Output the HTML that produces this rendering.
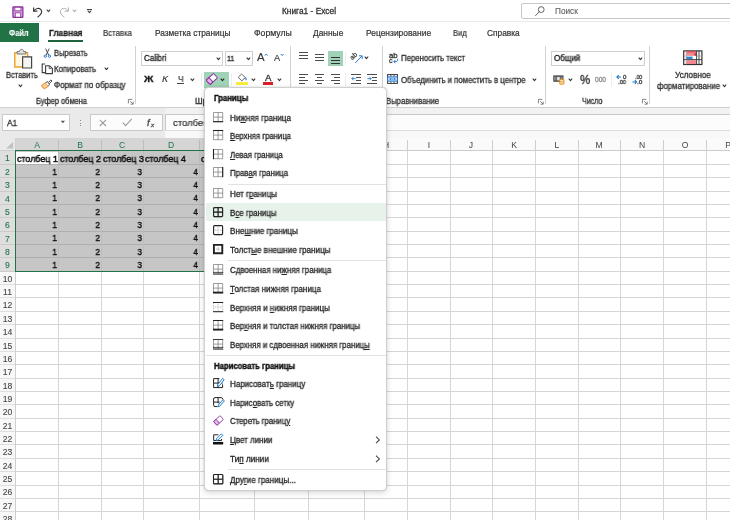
<!DOCTYPE html><html lang="ru"><head><meta charset="utf-8"><title>Книга1 - Excel</title><style>
html,body{margin:0;padding:0;background:#fff;}
#app{position:relative;width:730px;height:520px;overflow:hidden;background:#fff;font-family:"Liberation Sans",sans-serif;}
.b{position:absolute;}
.i{position:absolute;overflow:visible;will-change:transform;}
.t{will-change:transform;-webkit-text-stroke:0.3px currentColor;position:absolute;white-space:nowrap;line-height:14px;height:14px;transform-origin:0 50%;}
.t u{text-decoration:underline;text-underline-offset:1px;text-decoration-thickness:0.6px;}
.t.rot{transform-origin:50% 50%;}
.t.c{width:20px;text-align:center;display:block;}
.t.rn{width:15px;text-align:center;display:block;left:0;}
.t.num{width:20px;text-align:right;display:block;transform-origin:100% 50%;}

</style></head><body><div id="app">
<div class="b" style="left:0px;top:0px;width:730px;height:22px;background:#fff;"></div>
<div class="b" style="left:0px;top:21.4px;width:730px;height:0.8px;background:#e9e9e9;"></div>
<div class="b" style="left:521.4px;top:3px;width:218.6px;height:15.8px;background:#fff;border:1px solid #c8c8c8;box-sizing:border-box;border-radius:2px;"></div>
<div class="b" style="left:86.6px;top:8.6px;width:5.0px;height:0.9px;background:#444;"></div>
<div class="b" style="left:0px;top:22.8px;width:38.6px;height:19.5px;background:#217346;"></div>
<div class="b" style="left:48px;top:39.5px;width:35.2px;height:2.0px;background:#1b643c;"></div>
<div class="b" style="left:0px;top:43px;width:730px;height:64px;background:#ffffff;"></div>
<div class="b" style="left:0px;top:106.6px;width:730px;height:1.0px;background:#d0d0d0;"></div>
<div class="b" style="left:0px;top:107.6px;width:730px;height:30.2px;background:#f2f2f2;"></div>
<div class="b" style="left:0px;top:107.6px;width:165.2px;height:30.2px;background:#eaeaea;"></div>
<div class="b" style="left:165.2px;top:130.8px;width:564.8px;height:7.0px;background:#f8f8f8;"></div>
<div class="b" style="left:135.0px;top:45.5px;width:1.0px;height:58.5px;background:#d2d2d2;"></div>
<div class="b" style="left:289.8px;top:45.5px;width:1.0px;height:58.5px;background:#d2d2d2;"></div>
<div class="b" style="left:382.0px;top:45.5px;width:1.0px;height:58.5px;background:#d2d2d2;"></div>
<div class="b" style="left:545.0px;top:45.5px;width:1.0px;height:58.5px;background:#d2d2d2;"></div>
<div class="b" style="left:649.0px;top:45.5px;width:1.0px;height:58.5px;background:#d2d2d2;"></div>
<div class="b" style="left:200.6px;top:73px;width:0.8px;height:13px;background:#ececec;"></div>
<div class="b" style="left:231.4px;top:73px;width:0.8px;height:13px;background:#ececec;"></div>
<div class="b" style="left:345.0px;top:52px;width:0.8px;height:13px;background:#ececec;"></div>
<div class="b" style="left:345.0px;top:73px;width:0.8px;height:13px;background:#ececec;"></div>
<div class="b" style="left:610.6px;top:73px;width:0.8px;height:13px;background:#ececec;"></div>
<div class="b" style="left:141.4px;top:50.8px;width:81.2px;height:14.8px;background:#fff;border:1px solid #cfcfcf;box-sizing:border-box;"></div>
<div class="b" style="left:225.2px;top:50.8px;width:27.8px;height:14.8px;background:#fff;border:1px solid #cfcfcf;box-sizing:border-box;"></div>
<div class="b" style="left:177.4px;top:82.8px;width:6.4px;height:0.9px;background:#444;"></div>
<div class="b" style="left:204.2px;top:72.1px;width:24.4px;height:15.5px;background:#9fd2b6;"></div>
<div class="b" style="left:236px;top:82px;width:11.5px;height:2.6px;background:#f9ec3e;"></div>
<div class="b" style="left:262.7px;top:82.3px;width:10.6px;height:2.3px;background:#d9202a;"></div>
<div class="b" style="left:298.6px;top:51.95px;width:9.4px;height:1.3px;background:#4d4d4d;"></div>
<div class="b" style="left:298.6px;top:54.95px;width:9.4px;height:1.3px;background:#4d4d4d;"></div>
<div class="b" style="left:298.6px;top:57.95px;width:9.4px;height:1.3px;background:#4d4d4d;"></div>
<div class="b" style="left:314.7px;top:53.85px;width:9.3px;height:1.3px;background:#4d4d4d;"></div>
<div class="b" style="left:314.7px;top:57.05px;width:9.3px;height:1.3px;background:#4d4d4d;"></div>
<div class="b" style="left:314.7px;top:60.15px;width:9.3px;height:1.3px;background:#4d4d4d;"></div>
<div class="b" style="left:328px;top:50.8px;width:14.6px;height:14.8px;background:#9fd2b6;"></div>
<div class="b" style="left:330.9px;top:56.75px;width:9.1px;height:1.1px;background:#333;"></div>
<div class="b" style="left:330.9px;top:59.85px;width:9.1px;height:1.1px;background:#333;"></div>
<div class="b" style="left:330.9px;top:62.75px;width:9.1px;height:1.1px;background:#333;"></div>
<div class="b" style="left:298.6px;top:74.05px;width:9.4px;height:1.3px;background:#4d4d4d;"></div>
<div class="b" style="left:298.6px;top:76.95px;width:6.0px;height:1.3px;background:#4d4d4d;"></div>
<div class="b" style="left:298.6px;top:79.85px;width:9.4px;height:1.3px;background:#4d4d4d;"></div>
<div class="b" style="left:298.6px;top:82.65px;width:6.0px;height:1.3px;background:#4d4d4d;"></div>
<div class="b" style="left:314.7px;top:74.05px;width:9.3px;height:1.3px;background:#4d4d4d;"></div>
<div class="b" style="left:316.6px;top:76.95px;width:5.6px;height:1.3px;background:#4d4d4d;"></div>
<div class="b" style="left:314.7px;top:79.85px;width:9.3px;height:1.3px;background:#4d4d4d;"></div>
<div class="b" style="left:316.6px;top:82.65px;width:5.6px;height:1.3px;background:#4d4d4d;"></div>
<div class="b" style="left:330.6px;top:74.05px;width:9.4px;height:1.3px;background:#4d4d4d;"></div>
<div class="b" style="left:334px;top:76.95px;width:6px;height:1.3px;background:#4d4d4d;"></div>
<div class="b" style="left:330.6px;top:79.85px;width:9.4px;height:1.3px;background:#4d4d4d;"></div>
<div class="b" style="left:334px;top:82.65px;width:6px;height:1.3px;background:#4d4d4d;"></div>
<div class="b" style="left:351px;top:74.05px;width:10px;height:1.3px;background:#4d4d4d;"></div>
<div class="b" style="left:356px;top:76.95px;width:5px;height:1.3px;background:#4d4d4d;"></div>
<div class="b" style="left:356px;top:79.85px;width:5px;height:1.3px;background:#4d4d4d;"></div>
<div class="b" style="left:351px;top:82.65px;width:10px;height:1.3px;background:#4d4d4d;"></div>
<div class="b" style="left:367px;top:74.05px;width:10px;height:1.3px;background:#4d4d4d;"></div>
<div class="b" style="left:372px;top:76.95px;width:5px;height:1.3px;background:#4d4d4d;"></div>
<div class="b" style="left:372px;top:79.85px;width:5px;height:1.3px;background:#4d4d4d;"></div>
<div class="b" style="left:367px;top:82.65px;width:10px;height:1.3px;background:#4d4d4d;"></div>
<div class="b" style="left:551.4px;top:50.8px;width:93.6px;height:14.8px;background:#fff;border:1px solid #cfcfcf;box-sizing:border-box;"></div>
<div class="b" style="left:2px;top:114.4px;width:68px;height:16.4px;background:#fff;border:1px solid #c9c9c9;box-sizing:border-box;"></div>
<div class="b" style="left:79.7px;top:120.2px;width:1.1px;height:1.1px;background:#8a8a8a;"></div>
<div class="b" style="left:79.7px;top:122.5px;width:1.1px;height:1.1px;background:#8a8a8a;"></div>
<div class="b" style="left:79.7px;top:124.8px;width:1.1px;height:1.1px;background:#8a8a8a;"></div>
<div class="b" style="left:90.2px;top:114.4px;width:72.6px;height:16.4px;background:#fcfcfc;border:1px solid #c9c9c9;box-sizing:border-box;"></div>
<div class="b" style="left:165.2px;top:114.4px;width:574.8px;height:16.4px;background:#fcfcfc;border:1px solid #c9c9c9;box-sizing:border-box;border-bottom-color:#dcdcdc;"></div>
<div class="b" style="left:0px;top:137.8px;width:730px;height:382.2px;background:#fff;"></div>
<div class="b" style="left:0px;top:138px;width:730px;height:12.6px;background:#fafafa;"></div>
<div class="b" style="left:0px;top:137.8px;width:15.5px;height:12.8px;background:#eaeaea;"></div>
<div class="b" style="left:0px;top:150.6px;width:15.5px;height:369.4px;background:#f8f8f8;"></div>
<div class="b" style="left:15.5px;top:138px;width:348.5px;height:12.6px;background:#d5d5d5;"></div>
<div class="b" style="left:0px;top:151px;width:15.5px;height:120.24px;background:#dedede;"></div>
<div class="b" style="left:15.5px;top:151px;width:348.5px;height:120.24px;background:#c6c6c6;"></div>
<div class="b" style="left:16px;top:151.6px;width:42.2px;height:12.56px;background:#fff;"></div>
<div class="b" style="left:15.5px;top:163.86px;width:714.5px;height:1.0px;background:#d6d6d6;"></div>
<div class="b" style="left:0px;top:163.86px;width:15.5px;height:1.0px;background:#cbcbcb;"></div>
<div class="b" style="left:15.5px;top:177.22px;width:714.5px;height:1.0px;background:#d6d6d6;"></div>
<div class="b" style="left:0px;top:177.22px;width:15.5px;height:1.0px;background:#cbcbcb;"></div>
<div class="b" style="left:15.5px;top:190.58px;width:714.5px;height:1.0px;background:#d6d6d6;"></div>
<div class="b" style="left:0px;top:190.58px;width:15.5px;height:1.0px;background:#cbcbcb;"></div>
<div class="b" style="left:15.5px;top:203.94px;width:714.5px;height:1.0px;background:#d6d6d6;"></div>
<div class="b" style="left:0px;top:203.94px;width:15.5px;height:1.0px;background:#cbcbcb;"></div>
<div class="b" style="left:15.5px;top:217.3px;width:714.5px;height:1.0px;background:#d6d6d6;"></div>
<div class="b" style="left:0px;top:217.3px;width:15.5px;height:1.0px;background:#cbcbcb;"></div>
<div class="b" style="left:15.5px;top:230.66px;width:714.5px;height:1.0px;background:#d6d6d6;"></div>
<div class="b" style="left:0px;top:230.66px;width:15.5px;height:1.0px;background:#cbcbcb;"></div>
<div class="b" style="left:15.5px;top:244.02px;width:714.5px;height:1.0px;background:#d6d6d6;"></div>
<div class="b" style="left:0px;top:244.02px;width:15.5px;height:1.0px;background:#cbcbcb;"></div>
<div class="b" style="left:15.5px;top:257.38px;width:714.5px;height:1.0px;background:#d6d6d6;"></div>
<div class="b" style="left:0px;top:257.38px;width:15.5px;height:1.0px;background:#cbcbcb;"></div>
<div class="b" style="left:15.5px;top:270.74px;width:714.5px;height:1.0px;background:#d6d6d6;"></div>
<div class="b" style="left:0px;top:270.74px;width:15.5px;height:1.0px;background:#cbcbcb;"></div>
<div class="b" style="left:15.5px;top:284.1px;width:714.5px;height:1.0px;background:#d6d6d6;"></div>
<div class="b" style="left:0px;top:284.1px;width:15.5px;height:1.0px;background:#dedede;"></div>
<div class="b" style="left:15.5px;top:297.46px;width:714.5px;height:1.0px;background:#d6d6d6;"></div>
<div class="b" style="left:0px;top:297.46px;width:15.5px;height:1.0px;background:#dedede;"></div>
<div class="b" style="left:15.5px;top:310.82px;width:714.5px;height:1.0px;background:#d6d6d6;"></div>
<div class="b" style="left:0px;top:310.82px;width:15.5px;height:1.0px;background:#dedede;"></div>
<div class="b" style="left:15.5px;top:324.18px;width:714.5px;height:1.0px;background:#d6d6d6;"></div>
<div class="b" style="left:0px;top:324.18px;width:15.5px;height:1.0px;background:#dedede;"></div>
<div class="b" style="left:15.5px;top:337.54px;width:714.5px;height:1.0px;background:#d6d6d6;"></div>
<div class="b" style="left:0px;top:337.54px;width:15.5px;height:1.0px;background:#dedede;"></div>
<div class="b" style="left:15.5px;top:350.9px;width:714.5px;height:1.0px;background:#d6d6d6;"></div>
<div class="b" style="left:0px;top:350.9px;width:15.5px;height:1.0px;background:#dedede;"></div>
<div class="b" style="left:15.5px;top:364.26px;width:714.5px;height:1.0px;background:#d6d6d6;"></div>
<div class="b" style="left:0px;top:364.26px;width:15.5px;height:1.0px;background:#dedede;"></div>
<div class="b" style="left:15.5px;top:377.62px;width:714.5px;height:1.0px;background:#d6d6d6;"></div>
<div class="b" style="left:0px;top:377.62px;width:15.5px;height:1.0px;background:#dedede;"></div>
<div class="b" style="left:15.5px;top:390.98px;width:714.5px;height:1.0px;background:#d6d6d6;"></div>
<div class="b" style="left:0px;top:390.98px;width:15.5px;height:1.0px;background:#dedede;"></div>
<div class="b" style="left:15.5px;top:404.34px;width:714.5px;height:1.0px;background:#d6d6d6;"></div>
<div class="b" style="left:0px;top:404.34px;width:15.5px;height:1.0px;background:#dedede;"></div>
<div class="b" style="left:15.5px;top:417.7px;width:714.5px;height:1.0px;background:#d6d6d6;"></div>
<div class="b" style="left:0px;top:417.7px;width:15.5px;height:1.0px;background:#dedede;"></div>
<div class="b" style="left:15.5px;top:431.06px;width:714.5px;height:1.0px;background:#d6d6d6;"></div>
<div class="b" style="left:0px;top:431.06px;width:15.5px;height:1.0px;background:#dedede;"></div>
<div class="b" style="left:15.5px;top:444.42px;width:714.5px;height:1.0px;background:#d6d6d6;"></div>
<div class="b" style="left:0px;top:444.42px;width:15.5px;height:1.0px;background:#dedede;"></div>
<div class="b" style="left:15.5px;top:457.78px;width:714.5px;height:1.0px;background:#d6d6d6;"></div>
<div class="b" style="left:0px;top:457.78px;width:15.5px;height:1.0px;background:#dedede;"></div>
<div class="b" style="left:15.5px;top:471.14px;width:714.5px;height:1.0px;background:#d6d6d6;"></div>
<div class="b" style="left:0px;top:471.14px;width:15.5px;height:1.0px;background:#dedede;"></div>
<div class="b" style="left:15.5px;top:484.5px;width:714.5px;height:1.0px;background:#d6d6d6;"></div>
<div class="b" style="left:0px;top:484.5px;width:15.5px;height:1.0px;background:#dedede;"></div>
<div class="b" style="left:15.5px;top:497.86px;width:714.5px;height:1.0px;background:#d6d6d6;"></div>
<div class="b" style="left:0px;top:497.86px;width:15.5px;height:1.0px;background:#dedede;"></div>
<div class="b" style="left:15.5px;top:511.22px;width:714.5px;height:1.0px;background:#d6d6d6;"></div>
<div class="b" style="left:0px;top:511.22px;width:15.5px;height:1.0px;background:#dedede;"></div>
<div class="b" style="left:15.5px;top:524.58px;width:714.5px;height:1.0px;background:#d6d6d6;"></div>
<div class="b" style="left:0px;top:524.58px;width:15.5px;height:1.0px;background:#dedede;"></div>
<div class="b" style="left:57.9px;top:150.6px;width:1.0px;height:369.4px;background:#d6d6d6;"></div>
<div class="b" style="left:57.9px;top:139.5px;width:1.0px;height:11.1px;background:#cfcfcf;"></div>
<div class="b" style="left:100.6px;top:150.6px;width:1.0px;height:369.4px;background:#d6d6d6;"></div>
<div class="b" style="left:100.6px;top:139.5px;width:1.0px;height:11.1px;background:#cfcfcf;"></div>
<div class="b" style="left:142.9px;top:150.6px;width:1.0px;height:369.4px;background:#d6d6d6;"></div>
<div class="b" style="left:142.9px;top:139.5px;width:1.0px;height:11.1px;background:#cfcfcf;"></div>
<div class="b" style="left:198.7px;top:150.6px;width:1.0px;height:369.4px;background:#d6d6d6;"></div>
<div class="b" style="left:198.7px;top:139.5px;width:1.0px;height:11.1px;background:#cfcfcf;"></div>
<div class="b" style="left:253.5px;top:150.6px;width:1.0px;height:369.4px;background:#d6d6d6;"></div>
<div class="b" style="left:253.5px;top:139.5px;width:1.0px;height:11.1px;background:#cfcfcf;"></div>
<div class="b" style="left:308.0px;top:150.6px;width:1.0px;height:369.4px;background:#d6d6d6;"></div>
<div class="b" style="left:308.0px;top:139.5px;width:1.0px;height:11.1px;background:#cfcfcf;"></div>
<div class="b" style="left:363.5px;top:150.6px;width:1.0px;height:369.4px;background:#d6d6d6;"></div>
<div class="b" style="left:363.5px;top:139.5px;width:1.0px;height:11.1px;background:#cfcfcf;"></div>
<div class="b" style="left:406.5px;top:150.6px;width:1.0px;height:369.4px;background:#d6d6d6;"></div>
<div class="b" style="left:406.5px;top:139.5px;width:1.0px;height:11.1px;background:#cfcfcf;"></div>
<div class="b" style="left:449.5px;top:150.6px;width:1.0px;height:369.4px;background:#d6d6d6;"></div>
<div class="b" style="left:449.5px;top:139.5px;width:1.0px;height:11.1px;background:#cfcfcf;"></div>
<div class="b" style="left:492.3px;top:150.6px;width:1.0px;height:369.4px;background:#d6d6d6;"></div>
<div class="b" style="left:492.3px;top:139.5px;width:1.0px;height:11.1px;background:#cfcfcf;"></div>
<div class="b" style="left:534.9px;top:150.6px;width:1.0px;height:369.4px;background:#d6d6d6;"></div>
<div class="b" style="left:534.9px;top:139.5px;width:1.0px;height:11.1px;background:#cfcfcf;"></div>
<div class="b" style="left:577.5px;top:150.6px;width:1.0px;height:369.4px;background:#d6d6d6;"></div>
<div class="b" style="left:577.5px;top:139.5px;width:1.0px;height:11.1px;background:#cfcfcf;"></div>
<div class="b" style="left:620.1px;top:150.6px;width:1.0px;height:369.4px;background:#d6d6d6;"></div>
<div class="b" style="left:620.1px;top:139.5px;width:1.0px;height:11.1px;background:#cfcfcf;"></div>
<div class="b" style="left:662.8px;top:150.6px;width:1.0px;height:369.4px;background:#d6d6d6;"></div>
<div class="b" style="left:662.8px;top:139.5px;width:1.0px;height:11.1px;background:#cfcfcf;"></div>
<div class="b" style="left:705.7px;top:150.6px;width:1.0px;height:369.4px;background:#d6d6d6;"></div>
<div class="b" style="left:705.7px;top:139.5px;width:1.0px;height:11.1px;background:#cfcfcf;"></div>
<div class="b" style="left:748.5px;top:150.6px;width:1.0px;height:369.4px;background:#d6d6d6;"></div>
<div class="b" style="left:748.5px;top:139.5px;width:1.0px;height:11.1px;background:#cfcfcf;"></div>
<div class="b" style="left:15.5px;top:163.86px;width:348.5px;height:1.0px;background:#afafaf;"></div>
<div class="b" style="left:15.5px;top:177.22px;width:348.5px;height:1.0px;background:#afafaf;"></div>
<div class="b" style="left:15.5px;top:190.58px;width:348.5px;height:1.0px;background:#afafaf;"></div>
<div class="b" style="left:15.5px;top:203.94px;width:348.5px;height:1.0px;background:#afafaf;"></div>
<div class="b" style="left:15.5px;top:217.3px;width:348.5px;height:1.0px;background:#afafaf;"></div>
<div class="b" style="left:15.5px;top:230.66px;width:348.5px;height:1.0px;background:#afafaf;"></div>
<div class="b" style="left:15.5px;top:244.02px;width:348.5px;height:1.0px;background:#afafaf;"></div>
<div class="b" style="left:15.5px;top:257.38px;width:348.5px;height:1.0px;background:#afafaf;"></div>
<div class="b" style="left:57.9px;top:151px;width:1.0px;height:120.24px;background:#bebebe;"></div>
<div class="b" style="left:57.9px;top:139.5px;width:1.0px;height:11.1px;background:#bdbdbd;"></div>
<div class="b" style="left:100.6px;top:151px;width:1.0px;height:120.24px;background:#bebebe;"></div>
<div class="b" style="left:100.6px;top:139.5px;width:1.0px;height:11.1px;background:#bdbdbd;"></div>
<div class="b" style="left:142.9px;top:151px;width:1.0px;height:120.24px;background:#bebebe;"></div>
<div class="b" style="left:142.9px;top:139.5px;width:1.0px;height:11.1px;background:#bdbdbd;"></div>
<div class="b" style="left:198.7px;top:151px;width:1.0px;height:120.24px;background:#bebebe;"></div>
<div class="b" style="left:198.7px;top:139.5px;width:1.0px;height:11.1px;background:#bdbdbd;"></div>
<div class="b" style="left:253.5px;top:151px;width:1.0px;height:120.24px;background:#bebebe;"></div>
<div class="b" style="left:253.5px;top:139.5px;width:1.0px;height:11.1px;background:#bdbdbd;"></div>
<div class="b" style="left:308.0px;top:151px;width:1.0px;height:120.24px;background:#bebebe;"></div>
<div class="b" style="left:308.0px;top:139.5px;width:1.0px;height:11.1px;background:#bdbdbd;"></div>
<div class="b" style="left:15px;top:138px;width:1px;height:382px;background:#cfcfcf;"></div>
<div class="b" style="left:0px;top:150.2px;width:730px;height:1.0px;background:#cdcdcd;"></div>
<div class="b" style="left:15px;top:150.3px;width:349.6px;height:1.1px;background:#217346;"></div>
<div class="b" style="left:15.1px;top:150.3px;width:1.1px;height:121.34px;background:#217346;"></div>
<div class="b" style="left:15.1px;top:270.54px;width:349.5px;height:1.1px;background:#217346;"></div>
<div class="b" style="left:363.4px;top:150.2px;width:1.4px;height:121.54px;background:#217346;"></div>
<div class="b" style="left:204.3px;top:87.2px;width:182.8px;height:403.4px;background:#fff;border:1px solid #cfcfcf;box-sizing:border-box;border-radius:4.5px;z-index:10;box-shadow:0 2px 6px rgba(0,0,0,0.15),0 0 1.5px rgba(0,0,0,0.18);"></div>
<div class="b" style="left:205.8px;top:202.9px;width:180.3px;height:18.6px;background:#e7f2eb;z-index:10;"></div>
<div class="b" style="left:228px;top:183.6px;width:158.1px;height:0.8px;background:#e2e2e2;z-index:10;"></div>
<div class="b" style="left:228px;top:259.6px;width:158.1px;height:0.8px;background:#e2e2e2;z-index:10;"></div>
<div class="b" style="left:206px;top:354.9px;width:180.1px;height:0.8px;background:#e2e2e2;z-index:10;"></div>
<div class="b" style="left:228px;top:468.6px;width:158.1px;height:0.8px;background:#e2e2e2;z-index:10;"></div>
<svg class="i" style="left:534px;top:5px;" width="12" height="12" viewBox="0 0 12 12"><circle cx="7.2" cy="4.6" r="2.9" fill="none" stroke="#555" stroke-width="0.9"/><path d="M5.1 6.8 L1.6 10.6" stroke="#555" stroke-width="0.9" stroke-linecap="round"/></svg>
<svg class="i" style="left:12.3px;top:5.6px;" width="12" height="12" viewBox="0 0 12 12"><rect x="0.9" y="0.9" width="10" height="10.4" rx="0.6" fill="#cf9bdb" stroke="#862d9b" stroke-width="1.2"/><rect x="2.9" y="1.3" width="6" height="3.5" fill="#fff" stroke="#862d9b" stroke-width="0.7"/><rect x="3.3" y="6.9" width="5.2" height="4.2" fill="#fff" stroke="#862d9b" stroke-width="0.7"/></svg>
<svg class="i" style="left:31.5px;top:5.5px;" width="12" height="12" viewBox="0 0 12 12"><path d="M1.6 1.4 V5.2 H5.4" fill="none" stroke="#3a3a3a" stroke-width="1.2"/><path d="M1.9 5 C3.6 2.2 7 1.6 8.9 3.6 C10.6 5.6 9.6 8.2 5.6 11.2" fill="none" stroke="#3a3a3a" stroke-width="1.2"/></svg>
<svg class="i" style="left:45.55px;top:8.82px;" width="4.9" height="3.55" viewBox="0 0 4.9 3.55"><path d="M1 1 L2.45 2.55 L3.9 1" fill="none" stroke="#444" stroke-width="1.1" stroke-linecap="round" stroke-linejoin="round"/></svg>
<svg class="i" style="left:57.5px;top:5.5px;" width="12" height="12" viewBox="0 0 12 12"><path d="M10.4 1.4 V5.2 H6.6" fill="none" stroke="#adadad" stroke-width="1"/><path d="M10.1 5 C8.4 2.2 5 1.6 3.1 3.6 C1.4 5.6 2.4 8.2 6.4 11.2" fill="none" stroke="#adadad" stroke-width="1"/></svg>
<svg class="i" style="left:71.55px;top:8.82px;" width="4.9" height="3.55" viewBox="0 0 4.9 3.55"><path d="M1 1 L2.45 2.55 L3.9 1" fill="none" stroke="#b0b0b0" stroke-width="1.1" stroke-linecap="round" stroke-linejoin="round"/></svg>
<svg class="i" style="left:86.65px;top:10.22px;" width="4.9" height="3.55" viewBox="0 0 4.9 3.55"><path d="M1 1 L2.45 2.55 L3.9 1" fill="none" stroke="#444" stroke-width="1.1" stroke-linecap="round" stroke-linejoin="round"/></svg>
<svg class="i" style="left:13px;top:47.5px;" width="20" height="21" viewBox="0 0 20 21"><path d="M1.8 4.6 H14.6 V19 H1.8 Z" fill="#fff7e6" stroke="#e8a425" stroke-width="1.4"/>
<path d="M4.2 6 V3.6 H6.4 C6.6 0.6 10.4 0.6 10.6 3.6 H12.8 V6 Z" fill="#e4e4e4" stroke="#666" stroke-width="0.9" stroke-linejoin="round"/>
<path d="M9.6 8.8 H18.6 V20 H9.6 Z" fill="#f4f4f4" stroke="#444" stroke-width="1.2"/></svg>
<svg class="i" style="left:18.35px;top:83.62px;" width="4.9" height="3.55" viewBox="0 0 4.9 3.55"><path d="M1 1 L2.45 2.55 L3.9 1" fill="none" stroke="#333" stroke-width="1.1" stroke-linecap="round" stroke-linejoin="round"/></svg>
<svg class="i" style="left:42.6px;top:47.8px;" width="9" height="11" viewBox="0 0 9 11"><path d="M2.6 0.6 L5.6 7 M6.2 0.6 L3.2 7" stroke="#444" stroke-width="0.95" fill="none"/><circle cx="2.3" cy="8.2" r="1.15" fill="none" stroke="#1f74c9" stroke-width="1"/><circle cx="6.5" cy="8.2" r="1.15" fill="none" stroke="#1f74c9" stroke-width="1"/></svg>
<svg class="i" style="left:40.6px;top:62.8px;" width="13" height="12" viewBox="0 0 13 12"><path d="M4.2 1 H1.2 V9.6 H4.2" fill="none" stroke="#3c3c3c" stroke-width="1.1"/><path d="M4.6 2.8 H8.6 L11.4 5.4 V10.6 H4.6 Z" fill="#fff" stroke="#3c3c3c" stroke-width="1.1" stroke-linejoin="round"/><path d="M8.2 5.6 H10.4 M8.2 3 V5.6" fill="none" stroke="#3c3c3c" stroke-width="0.8"/></svg>
<svg class="i" style="left:103.55px;top:67.22px;" width="4.9" height="3.55" viewBox="0 0 4.9 3.55"><path d="M1 1 L2.45 2.55 L3.9 1" fill="none" stroke="#333" stroke-width="1.1" stroke-linecap="round" stroke-linejoin="round"/></svg>
<svg class="i" style="left:41.4px;top:79px;" width="12" height="11" viewBox="0 0 12 11"><path d="M0.6 6.4 L4.6 3.6 L7.2 7.2 L3.6 9.8 Q1.4 9.2 0.6 6.4 Z" fill="#f9cf95" stroke="#e28a1e" stroke-width="1" stroke-linejoin="round"/><path d="M4.8 3.8 L6.4 2.6 L8.6 5.8 L7.2 7" fill="#fff" stroke="#444" stroke-width="0.9" stroke-linejoin="round"/><path d="M7.2 3.6 L10 0.9 L11 2 L8.2 4.8" fill="#fff" stroke="#444" stroke-width="0.9" stroke-linejoin="round"/></svg>
<svg class="i" style="left:127.5px;top:98.6px;" width="6" height="6" viewBox="0 0 6 6"><path d="M0.4 4.4 V0.4 H4.4" fill="none" stroke="#666" stroke-width="0.8"/><path d="M2.2 2.2 L5 5 M5.2 2.6 V5.2 H2.6" fill="none" stroke="#666" stroke-width="0.8"/></svg>
<svg class="i" style="left:537.8px;top:98.6px;" width="6" height="6" viewBox="0 0 6 6"><path d="M0.4 4.4 V0.4 H4.4" fill="none" stroke="#666" stroke-width="0.8"/><path d="M2.2 2.2 L5 5 M5.2 2.6 V5.2 H2.6" fill="none" stroke="#666" stroke-width="0.8"/></svg>
<svg class="i" style="left:642px;top:98.6px;" width="6" height="6" viewBox="0 0 6 6"><path d="M0.4 4.4 V0.4 H4.4" fill="none" stroke="#666" stroke-width="0.8"/><path d="M2.2 2.2 L5 5 M5.2 2.6 V5.2 H2.6" fill="none" stroke="#666" stroke-width="0.8"/></svg>
<svg class="i" style="left:216.15px;top:56.83px;" width="4.9" height="3.55" viewBox="0 0 4.9 3.55"><path d="M1 1 L2.45 2.55 L3.9 1" fill="none" stroke="#333" stroke-width="1.1" stroke-linecap="round" stroke-linejoin="round"/></svg>
<svg class="i" style="left:246.35px;top:56.83px;" width="4.9" height="3.55" viewBox="0 0 4.9 3.55"><path d="M1 1 L2.45 2.55 L3.9 1" fill="none" stroke="#333" stroke-width="1.1" stroke-linecap="round" stroke-linejoin="round"/></svg>
<svg class="i" style="left:263.6px;top:52.6px;" width="5" height="4" viewBox="0 0 5 4"><path d="M0.8 2.6 L2.2 1 L3.6 2.6" fill="none" stroke="#2b7cd3" stroke-width="1"/></svg>
<svg class="i" style="left:279.8px;top:52.6px;" width="5" height="4" viewBox="0 0 5 4"><path d="M0.8 1 L2.2 2.6 L3.6 1" fill="none" stroke="#2b7cd3" stroke-width="1"/></svg>
<svg class="i" style="left:189.85px;top:78.02px;" width="4.9" height="3.55" viewBox="0 0 4.9 3.55"><path d="M1 1 L2.45 2.55 L3.9 1" fill="none" stroke="#333" stroke-width="1.1" stroke-linecap="round" stroke-linejoin="round"/></svg>
<svg class="i" style="left:205.6px;top:73px;" width="12" height="12" viewBox="0 0 12 12"><g transform="translate(5.8 6) rotate(-42)"><rect x="-5" y="-2.9" width="10" height="5.8" rx="0.7" fill="#fff" stroke="#862d9b" stroke-width="0.95"/><path d="M-5 -2.2 Q-5 -2.9 -4.3 -2.9 H-1.2 V2.9 H-4.3 Q-5 2.9 -5 2.2 Z" fill="#e7b3f0" stroke="#862d9b" stroke-width="0.95"/></g></svg>
<svg class="i" style="left:220.35px;top:78.02px;" width="4.9" height="3.55" viewBox="0 0 4.9 3.55"><path d="M1 1 L2.45 2.55 L3.9 1" fill="none" stroke="#222" stroke-width="1.1" stroke-linecap="round" stroke-linejoin="round"/></svg>
<svg class="i" style="left:237px;top:73px;" width="11" height="9" viewBox="0 0 11 9"><path d="M4.6 1 L8.4 4.6 L4.8 7.8 L1.2 4.4 Z" fill="#fff" stroke="#555" stroke-width="0.9" stroke-linejoin="round"/><path d="M8.8 4.4 Q10 6.2 9.2 7.2 Q8.2 6.4 8.8 4.4" fill="#2b7cd3" stroke="#2b7cd3" stroke-width="0.5"/></svg>
<svg class="i" style="left:251.25px;top:78.02px;" width="4.9" height="3.55" viewBox="0 0 4.9 3.55"><path d="M1 1 L2.45 2.55 L3.9 1" fill="none" stroke="#333" stroke-width="1.1" stroke-linecap="round" stroke-linejoin="round"/></svg>
<svg class="i" style="left:277.15px;top:78.02px;" width="4.9" height="3.55" viewBox="0 0 4.9 3.55"><path d="M1 1 L2.45 2.55 L3.9 1" fill="none" stroke="#333" stroke-width="1.1" stroke-linecap="round" stroke-linejoin="round"/></svg>
<svg class="i" style="left:349.5px;top:51.5px;" width="14" height="12" viewBox="0 0 14 12"><path d="M5.2 11 L12 4 M9 3.8 H12.2 V7" fill="none" stroke="#2b7cd3" stroke-width="1"/><text x="2.2" y="8.2" font-size="6.8" font-family="Liberation Sans, sans-serif" fill="#333" stroke="#333" stroke-width="0.2" transform="rotate(-43 2.2 8.2)">ab</text></svg>
<svg class="i" style="left:363.55px;top:56.43px;" width="4.9" height="3.55" viewBox="0 0 4.9 3.55"><path d="M1 1 L2.45 2.55 L3.9 1" fill="none" stroke="#333" stroke-width="1.1" stroke-linecap="round" stroke-linejoin="round"/></svg>
<svg class="i" style="left:350.5px;top:76.4px;" width="6" height="5" viewBox="0 0 6 5"><path d="M4.6 2.6 H1 M2.6 0.8 L0.8 2.6 L2.6 4.4" fill="none" stroke="#2b7cd3" stroke-width="0.9"/></svg>
<svg class="i" style="left:366.5px;top:76.4px;" width="6" height="5" viewBox="0 0 6 5"><path d="M0.4 2.6 H4 M2.4 0.8 L4.2 2.6 L2.4 4.4" fill="none" stroke="#2b7cd3" stroke-width="0.9"/></svg>
<svg class="i" style="left:388.6px;top:57.6px;" width="10" height="6" viewBox="0 0 10 6"><path d="M5 3.6 H7.4 Q9.4 3.2 8.6 0.8 M6.4 2 L4.8 3.6 L6.4 5.2" fill="none" stroke="#2b7cd3" stroke-width="1"/></svg>
<svg class="i" style="left:387px;top:74px;" width="11" height="10" viewBox="0 0 11 10"><rect x="0.6" y="0.6" width="9.8" height="8.8" fill="#fff" stroke="#333" stroke-width="1"/><path d="M3.9 0.6 V2.8 M7.1 0.6 V2.8 M3.9 7.2 V9.4 M7.1 7.2 V9.4" stroke="#333" stroke-width="0.8"/><rect x="0.6" y="2.9" width="9.8" height="4.2" fill="#d3e7fa" stroke="#1f74c9" stroke-width="1"/><path d="M2 5 L3.8 3.8 V6.2 Z M9 5 L7.2 3.8 V6.2 Z" fill="#1f74c9"/><path d="M3.8 5 H7.2" stroke="#1f74c9" stroke-width="0.8"/></svg>
<svg class="i" style="left:531.75px;top:78.02px;" width="4.9" height="3.55" viewBox="0 0 4.9 3.55"><path d="M1 1 L2.45 2.55 L3.9 1" fill="none" stroke="#333" stroke-width="1.1" stroke-linecap="round" stroke-linejoin="round"/></svg>
<svg class="i" style="left:637.55px;top:56.83px;" width="4.9" height="3.55" viewBox="0 0 4.9 3.55"><path d="M1 1 L2.45 2.55 L3.9 1" fill="none" stroke="#333" stroke-width="1.1" stroke-linecap="round" stroke-linejoin="round"/></svg>
<svg class="i" style="left:552.8px;top:75.4px;" width="12" height="10" viewBox="0 0 12 10"><rect x="0.7" y="0.8" width="9.4" height="5.6" fill="#666" stroke="#444" stroke-width="0.7"/><ellipse cx="5.4" cy="3.6" rx="1.5" ry="1.9" fill="#e8e8e8"/><path d="M2 2.2 V5 M8.8 2.2 V5" stroke="#ddd" stroke-width="0.6"/><rect x="6.7" y="4.4" width="4.2" height="4.8" rx="0.5" fill="#fde3b3" stroke="#e28a1e" stroke-width="0.95"/><path d="M6.9 6.8 H10.7" stroke="#e28a1e" stroke-width="0.7"/></svg>
<svg class="i" style="left:567.95px;top:78.02px;" width="4.9" height="3.55" viewBox="0 0 4.9 3.55"><path d="M1 1 L2.45 2.55 L3.9 1" fill="none" stroke="#333" stroke-width="1.1" stroke-linecap="round" stroke-linejoin="round"/></svg>
<svg class="i" style="left:615.6px;top:73.6px" width="11" height="11" viewBox="0 0 11 11"><path d="M5 3 H0.9 M2.7 1.2 L0.9 3 L2.7 4.8" fill="none" stroke="#1f74c9" stroke-width="1.05"/></svg>
<svg class="i" style="left:631.6px;top:73.6px" width="11" height="11" viewBox="0 0 11 11"><path d="M0.4 8 H4.6 M2.8 6.2 L4.6 8 L2.8 9.8" fill="none" stroke="#1f74c9" stroke-width="1.05"/></svg>
<svg class="i" style="left:683px;top:49.6px;" width="20" height="16" viewBox="0 0 20 16"><rect x="0.7" y="0.9" width="18.2" height="13.6" fill="#fff" stroke="#333" stroke-width="1.2"/>
<rect x="3.4" y="1.2" width="10" height="4.6" fill="#f4868f"/><rect x="3.4" y="1.2" width="10" height="1.1" fill="#d4424c"/><rect x="11.4" y="3.4" width="2" height="2.2" fill="#c62f3a"/>
<rect x="3.2" y="6.6" width="6.4" height="2.5" fill="#2f86d6"/><rect x="3.4" y="10.2" width="10" height="3.8" fill="#f4868f"/>
<path d="M0.7 9.6 H18.9 M13.6 0.9 V14.5 M16 0.9 V14.5" stroke="#333" stroke-width="0.9" fill="none"/>
<path d="M3.3 0.9 V14.5 M0.7 6 H3.3 M13.6 6 H18.9" stroke="#8d8d8d" stroke-width="0.6" fill="none"/></svg>
<svg class="i" style="left:722.15px;top:84.22px;" width="4.9" height="3.55" viewBox="0 0 4.9 3.55"><path d="M1 1 L2.45 2.55 L3.9 1" fill="none" stroke="#333" stroke-width="1.1" stroke-linecap="round" stroke-linejoin="round"/></svg>
<svg class="i" style="left:60.4px;top:119.6px;" width="6" height="4" viewBox="0 0 6 4"><path d="M0.8 0.8 H5 L2.9 3.2 Z" fill="#555"/></svg>
<svg class="i" style="left:98.6px;top:118.6px;" width="8" height="8" viewBox="0 0 8 8"><path d="M0.8 0.8 L7 7 M7 0.8 L0.8 7" stroke="#9c9c9c" stroke-width="1.1"/></svg>
<svg class="i" style="left:121.6px;top:118.4px;" width="11" height="9" viewBox="0 0 11 9"><path d="M0.8 4.6 L3.6 7.6 L9.8 0.8" fill="none" stroke="#9c9c9c" stroke-width="1.1"/></svg>
<svg class="i" style="left:5px;top:141px;" width="9" height="8" viewBox="0 0 9 8"><path d="M8.2 0.8 V7.4 H1 Z" fill="#c2c2c2"/></svg>
<svg class="i" style="left:213.2px;top:111.5px;z-index:11;" width="10.2" height="10.2" viewBox="0 0 10.2 10.2"><path d="M0.5 0.5 H9.7 V9.7 H0.5 Z M5.1 0.5 V9.7 M0.5 5.1 H9.7" fill="none" stroke="#707070" stroke-width="0.7"/><path d="M0 9.7 H10.2" fill="none" stroke="#222" stroke-width="1.1"/></svg>
<svg class="i" style="left:213.2px;top:130.1px;z-index:11;" width="10.2" height="10.2" viewBox="0 0 10.2 10.2"><path d="M0.5 0.5 H9.7 V9.7 H0.5 Z M5.1 0.5 V9.7 M0.5 5.1 H9.7" fill="none" stroke="#707070" stroke-width="0.7"/><path d="M0 0.5 H10.2" fill="none" stroke="#222" stroke-width="1.1"/></svg>
<svg class="i" style="left:213.2px;top:148.7px;z-index:11;" width="10.2" height="10.2" viewBox="0 0 10.2 10.2"><path d="M0.5 0.5 H9.7 V9.7 H0.5 Z M5.1 0.5 V9.7 M0.5 5.1 H9.7" fill="none" stroke="#707070" stroke-width="0.7"/><path d="M0.5 0 V10.2" fill="none" stroke="#222" stroke-width="1.1"/></svg>
<svg class="i" style="left:213.2px;top:167.3px;z-index:11;" width="10.2" height="10.2" viewBox="0 0 10.2 10.2"><path d="M0.5 0.5 H9.7 V9.7 H0.5 Z M5.1 0.5 V9.7 M0.5 5.1 H9.7" fill="none" stroke="#707070" stroke-width="0.7"/><path d="M9.7 0 V10.2" fill="none" stroke="#222" stroke-width="1.1"/></svg>
<svg class="i" style="left:213.2px;top:187.9px;z-index:11;" width="10.2" height="10.2" viewBox="0 0 10.2 10.2"><path d="M0.5 0.5 H9.7 V9.7 H0.5 Z M5.1 0.5 V9.7 M0.5 5.1 H9.7" fill="none" stroke="#707070" stroke-width="0.7"/></svg>
<svg class="i" style="left:213.2px;top:206.5px;z-index:11;" width="10.2" height="10.2" viewBox="0 0 10.2 10.2"><path d="M0.5 0.5 H9.7 V9.7 H0.5 Z M5.1 0.5 V9.7 M0.5 5.1 H9.7" fill="none" stroke="#707070" stroke-width="0.7"/><rect x="0.6" y="0.6" width="9" height="9" rx="1.2" fill="none" stroke="#222" stroke-width="1.1"/><path d="M5.1 0.6 V9.6 M0.6 5.1 H9.6" fill="none" stroke="#222" stroke-width="1.1"/></svg>
<svg class="i" style="left:213.2px;top:225.1px;z-index:11;" width="10.2" height="10.2" viewBox="0 0 10.2 10.2"><path d="M0.5 0.5 H9.7 V9.7 H0.5 Z M5.1 0.5 V9.7 M0.5 5.1 H9.7" fill="none" stroke="#b5b5b5" stroke-width="0.8" stroke-dasharray="1 0.6"/><rect x="0.6" y="0.6" width="9" height="9" rx="1" fill="none" stroke="#222" stroke-width="1.1"/></svg>
<svg class="i" style="left:213.2px;top:243.7px;z-index:11;" width="10.2" height="10.2" viewBox="0 0 10.2 10.2"><path d="M5.1 3 V7.2 M3 5.1 H7.2" fill="none" stroke="#b5b5b5" stroke-width="0.8"/><path d="M0.9 0.9 H9.3 V9.3 H0.9 Z" fill="none" stroke="#222" stroke-width="1.9"/></svg>
<svg class="i" style="left:213.2px;top:264.3px;z-index:11;" width="10.2" height="10.2" viewBox="0 0 10.2 10.2"><path d="M0.5 0.5 H9.7 V9.7 H0.5 Z M5.1 0.5 V9.7 M0.5 5.1 H9.7" fill="none" stroke="#707070" stroke-width="0.7"/><path d="M0 8.4 H10.2 M0 10.2 H10.2" fill="none" stroke="#222" stroke-width="0.8"/></svg>
<svg class="i" style="left:213.2px;top:282.9px;z-index:11;" width="10.2" height="10.2" viewBox="0 0 10.2 10.2"><path d="M0.5 0.5 H9.7 V9.7 H0.5 Z M5.1 0.5 V9.7 M0.5 5.1 H9.7" fill="none" stroke="#707070" stroke-width="0.7"/><path d="M0 9.6 H10.2" fill="none" stroke="#222" stroke-width="1.9"/></svg>
<svg class="i" style="left:213.2px;top:301.5px;z-index:11;" width="10.2" height="10.2" viewBox="0 0 10.2 10.2"><path d="M0.5 0.5 H9.7 V9.7 H0.5 Z M5.1 0.5 V9.7 M0.5 5.1 H9.7" fill="none" stroke="#b5b5b5" stroke-width="0.8" stroke-dasharray="1 0.6"/><path d="M0 0.5 H10.2 M0 9.7 H10.2" fill="none" stroke="#222" stroke-width="1.0"/></svg>
<svg class="i" style="left:213.2px;top:320.1px;z-index:11;" width="10.2" height="10.2" viewBox="0 0 10.2 10.2"><path d="M0.5 0.5 H9.7 V9.7 H0.5 Z M5.1 0.5 V9.7 M0.5 5.1 H9.7" fill="none" stroke="#707070" stroke-width="0.7"/><path d="M0 0.5 H10.2" fill="none" stroke="#222" stroke-width="1.0"/><path d="M0 9.6 H10.2" fill="none" stroke="#222" stroke-width="1.9"/></svg>
<svg class="i" style="left:213.2px;top:338.7px;z-index:11;" width="10.2" height="10.2" viewBox="0 0 10.2 10.2"><path d="M0.5 0.5 H9.7 V9.7 H0.5 Z M5.1 0.5 V9.7 M0.5 5.1 H9.7" fill="none" stroke="#707070" stroke-width="0.7"/><path d="M0 0.5 H10.2 M0 8.4 H10.2 M0 10.2 H10.2" fill="none" stroke="#222" stroke-width="0.8"/></svg>
<svg class="i" style="left:213.2px;top:378.1px;z-index:11;" width="10.2" height="10.2" viewBox="0 0 10.2 10.2"><path d="M6.4 0.6 H0.6 V9.6 H9.6 V6.4 M5.1 0.6 V9.6 M0.6 5.1 H9.6" fill="none" stroke="#222" stroke-width="1.0"/><path d="M4.8 6.6 L9.6 0.4 L11.2 1.7 L6.4 7.8 L4.4 8.6 Z" fill="#fff" stroke="#1f74c9" stroke-width="0.95" stroke-linejoin="round"/></svg>
<svg class="i" style="left:213.2px;top:396.7px;z-index:11;" width="10.2" height="10.2" viewBox="0 0 10.2 10.2"><path d="M9.6 2.4 V2 Q9.6 0.6 8.2 0.6 H2 Q0.6 0.6 0.6 2 V8.2 Q0.6 9.6 2 9.6 H4.4 M0.6 5.1 H6.6 M5.1 0.6 V6.4" fill="none" stroke="#222" stroke-width="1.0"/><path d="M5.4 8 L10 2.6 L11.4 3.8 L6.8 9.2 L4.9 9.9 Z" fill="#fff" stroke="#1f74c9" stroke-width="0.95" stroke-linejoin="round"/></svg>
<svg class="i" style="left:213.2px;top:415.3px;z-index:11;" width="10.2" height="10.2" viewBox="0 0 10.2 10.2"><g transform="translate(0.4 0.2) scale(0.88)"><g transform="translate(5.8 6) rotate(-42)"><rect x="-5" y="-2.9" width="10" height="5.8" rx="0.7" fill="#fff" stroke="#862d9b" stroke-width="0.9"/><path d="M-5 -2.2 Q-5 -2.9 -4.3 -2.9 H-1.2 V2.9 H-4.3 Q-5 2.9 -5 2.2 Z" fill="#e7b3f0" stroke="#862d9b" stroke-width="0.9"/></g></g></svg>
<svg class="i" style="left:213.2px;top:433.9px;z-index:11;" width="10.2" height="10.2" viewBox="0 0 10.2 10.2"><path d="M5.4 0.8 H0.7 V6.6 H8.6 V5" fill="none" stroke="#222" stroke-width="1.0"/><path d="M3.6 4.6 L8.4 -0.2 L9.9 1.3 L5.1 6.1 L3.2 6.6 Z" fill="#fff" stroke="#1f74c9" stroke-width="0.95" stroke-linejoin="round"/><rect x="0" y="8" width="10.2" height="2.5" fill="#111"/></svg>
<svg class="i" style="left:213.2px;top:473.9px;z-index:11;" width="10.2" height="10.2" viewBox="0 0 10.2 10.2"><path d="M0.5 0.5 H9.7 V9.7 H0.5 Z M5.1 0.5 V9.7 M0.5 5.1 H9.7" fill="none" stroke="#707070" stroke-width="0.7"/><rect x="0.5" y="0.5" width="9.4" height="9.4" rx="1" fill="none" stroke="#222" stroke-width="1.1"/><path d="M5.2 0.5 V9.9 M0.5 5.2 H9.9" fill="none" stroke="#222" stroke-width="1.1"/></svg>
<svg class="i" style="left:375.4px;top:435.9px;z-index:11;" width="6" height="8" viewBox="0 0 6 8"><path d="M1 0.6 L4.4 3.9 L1 7.2" fill="none" stroke="#444" stroke-width="1.05"/></svg>
<svg class="i" style="left:375.4px;top:454.8px;z-index:11;" width="6" height="8" viewBox="0 0 6 8"><path d="M1 0.6 L4.4 3.9 L1 7.2" fill="none" stroke="#444" stroke-width="1.05"/></svg>
<span class="t " style="left:555.2px;top:4.90px;font-size:8.2px;color:#5c5c5c;-webkit-text-stroke-width:0.1px;transform:scaleX(1.0043);">Поиск</span>
<span class="t " style="left:282px;top:4.90px;font-size:8.2px;color:#333;transform:scaleX(1.0174);">Книга1  -  Excel</span>
<span class="t " style="left:9px;top:25.80px;font-size:8.5px;color:#fff;font-weight:700;-webkit-text-stroke-width:0.1px;transform:scaleX(0.8625);">Файл</span>
<span class="t " style="left:48.8px;top:25.70px;font-size:8.5px;color:#222;font-weight:700;transform:scaleX(0.9717);">Главная</span>
<span class="t " style="left:102.7px;top:25.70px;font-size:8.3px;color:#333;-webkit-text-stroke-width:0.2px;transform:scaleX(0.9370);">Вставка</span>
<span class="t " style="left:154.70000000000002px;top:25.70px;font-size:8.3px;color:#333;-webkit-text-stroke-width:0.2px;transform:scaleX(1.0029);">Разметка страницы</span>
<span class="t " style="left:254.3px;top:25.70px;font-size:8.3px;color:#333;-webkit-text-stroke-width:0.2px;transform:scaleX(1.0441);">Формулы</span>
<span class="t " style="left:312.7px;top:25.70px;font-size:8.3px;color:#333;-webkit-text-stroke-width:0.2px;transform:scaleX(1.0105);">Данные</span>
<span class="t " style="left:365.90000000000003px;top:25.70px;font-size:8.3px;color:#333;-webkit-text-stroke-width:0.2px;transform:scaleX(1.0159);">Рецензирование</span>
<span class="t " style="left:453.3px;top:25.70px;font-size:8.3px;color:#333;-webkit-text-stroke-width:0.2px;transform:scaleX(0.9124);">Вид</span>
<span class="t " style="left:487.3px;top:25.70px;font-size:8.3px;color:#333;-webkit-text-stroke-width:0.2px;transform:scaleX(1.0042);">Справка</span>
<span class="t " style="left:5.6px;top:69.30px;font-size:8.2px;color:#303030;transform:scaleX(0.9159);">Вставить</span>
<span class="t " style="left:54.4px;top:47.30px;font-size:8.2px;color:#303030;transform:scaleX(0.9225);">Вырезать</span>
<span class="t " style="left:54.4px;top:63.30px;font-size:8.2px;color:#303030;transform:scaleX(0.9571);">Копировать</span>
<span class="t " style="left:54.4px;top:79.10px;font-size:8.2px;color:#303030;transform:scaleX(0.9752);">Формат по образцу</span>
<span class="t " style="left:36.4px;top:95.00px;font-size:8.2px;color:#303030;transform:scaleX(0.9166);">Буфер обмена</span>
<span class="t " style="left:144px;top:52.30px;font-size:8.2px;color:#222;transform:scaleX(0.9647);">Calibri</span>
<span class="t " style="left:227.2px;top:52.30px;font-size:7.8px;color:#222;transform:scaleX(0.9019);">11</span>
<span class="t " style="left:257px;top:50.10px;font-size:10.6px;color:#333;-webkit-text-stroke-width:0.12px;transform:scaleX(1.0737);">A</span>
<span class="t " style="left:274.2px;top:51.10px;font-size:8.8px;color:#333;-webkit-text-stroke-width:0.12px;transform:scaleX(1.0553);">A</span>
<span class="t " style="left:143.9px;top:72.10px;font-size:9.6px;color:#222;font-weight:700;transform:scaleX(1.0840);">Ж</span>
<span class="t " style="left:161.8px;top:72.10px;font-size:9.2px;color:#333;font-style:italic;-webkit-text-stroke-width:0.12px;transform:scaleX(1.1066);">К</span>
<span class="t " style="left:177.8px;top:72.00px;font-size:9px;color:#333;-webkit-text-stroke-width:0.2px;transform:scaleX(0.9333);">Ч</span>
<span class="t " style="left:264.8px;top:71.20px;font-size:8.8px;color:#333;transform:scaleX(1.0894);">A</span>
<span class="t " style="left:194.8px;top:95.00px;font-size:8.2px;color:#303030;transform:scaleX(1.0097);">Шрифт</span>
<span class="t " style="left:389px;top:49.10px;font-size:7.2px;color:#333;transform:scaleX(1.0750);">ab</span>
<span class="t " style="left:389px;top:54.20px;font-size:7.2px;color:#333;transform:scaleX(0.9461);">c</span>
<span class="t " style="left:400.6px;top:52.30px;font-size:8.2px;color:#303030;transform:scaleX(0.9508);">Переносить текст</span>
<span class="t " style="left:400.6px;top:73.50px;font-size:8.2px;color:#303030;transform:scaleX(0.9518);">Объединить и поместить в центре</span>
<span class="t " style="left:386.3px;top:95.00px;font-size:8.2px;color:#303030;transform:scaleX(0.9422);">Выравнивание</span>
<span class="t " style="left:553.9px;top:52.30px;font-size:8.2px;color:#222;transform:scaleX(0.9758);">Общий</span>
<span class="t " style="left:579.8px;top:72.80px;font-size:12.8px;color:#222;-webkit-text-stroke-width:0.3px;transform:scaleX(0.8955);">%</span>
<span class="t " style="left:595px;top:72.60px;font-size:6.6px;color:#8a8a8a;transform:scaleX(0.9986);">000</span>
<span class="t " style="left:622.6px;top:70.30px;font-size:6.1px;color:#333;transform:scaleX(1.0028);">0</span>
<span class="t " style="left:618.0px;top:75.30px;font-size:6.1px;color:#333;transform:scaleX(0.9429);">.00</span>
<span class="t " style="left:635.2px;top:69.90px;font-size:6.1px;color:#333;transform:scaleX(0.8486);">.00</span>
<span class="t " style="left:637.0px;top:75.30px;font-size:6.1px;color:#333;transform:scaleX(1.0601);">.0</span>
<span class="t " style="left:582px;top:95.00px;font-size:8.2px;color:#303030;transform:scaleX(0.8658);">Число</span>
<span class="t " style="left:674.6px;top:69.40px;font-size:8.2px;color:#303030;transform:scaleX(0.9901);">Условное</span>
<span class="t " style="left:657px;top:80.10px;font-size:8.2px;color:#303030;transform:scaleX(0.9582);">форматирование</span>
<span class="t " style="left:6.9px;top:115.90px;font-size:8.8px;color:#2a2a2a;transform:scaleX(0.9567);">A1</span>
<span class="t " style="left:147.2px;top:116.30px;font-size:9.6px;color:#444;font-style:italic;font-family:"Liberation Serif",serif;transform:scaleX(1.4222);">f</span>
<span class="t " style="left:151.2px;top:118.30px;font-size:6.2px;color:#444;font-style:italic;font-family:"Liberation Serif",serif;transform:scaleX(1.2929);">x</span>
<span class="t " style="left:173.4px;top:115.50px;font-size:9.8px;color:#222;-webkit-text-stroke-width:0.15px;transform:scaleX(0.9696);">столбец 1</span>
<span class="t c" style="left:26.950000000000003px;top:137.80px;font-size:8.6px;color:#217346;-webkit-text-stroke-width:0px;">A</span>
<span class="t c" style="left:69.75px;top:137.80px;font-size:8.6px;color:#217346;-webkit-text-stroke-width:0px;">B</span>
<span class="t c" style="left:112.25px;top:137.80px;font-size:8.6px;color:#217346;-webkit-text-stroke-width:0px;">C</span>
<span class="t c" style="left:161.3px;top:137.80px;font-size:8.6px;color:#217346;-webkit-text-stroke-width:0px;">D</span>
<span class="t c" style="left:216.6px;top:137.80px;font-size:8.6px;color:#217346;-webkit-text-stroke-width:0px;">E</span>
<span class="t c" style="left:271.25px;top:137.80px;font-size:8.6px;color:#217346;-webkit-text-stroke-width:0px;">F</span>
<span class="t c" style="left:326.25px;top:137.80px;font-size:8.6px;color:#217346;-webkit-text-stroke-width:0px;">G</span>
<span class="t c" style="left:375.5px;top:137.80px;font-size:8.6px;color:#444;-webkit-text-stroke-width:0px;">H</span>
<span class="t c" style="left:418.5px;top:137.80px;font-size:8.6px;color:#444;-webkit-text-stroke-width:0px;">I</span>
<span class="t c" style="left:461.4px;top:137.80px;font-size:8.6px;color:#444;-webkit-text-stroke-width:0px;">J</span>
<span class="t c" style="left:504.1px;top:137.80px;font-size:8.6px;color:#444;-webkit-text-stroke-width:0px;">K</span>
<span class="t c" style="left:546.7px;top:137.80px;font-size:8.6px;color:#444;-webkit-text-stroke-width:0px;">L</span>
<span class="t c" style="left:589.3px;top:137.80px;font-size:8.6px;color:#444;-webkit-text-stroke-width:0px;">M</span>
<span class="t c" style="left:631.95px;top:137.80px;font-size:8.6px;color:#444;-webkit-text-stroke-width:0px;">N</span>
<span class="t c" style="left:674.75px;top:137.80px;font-size:8.6px;color:#444;-webkit-text-stroke-width:0px;">O</span>
<span class="t c" style="left:717.6px;top:137.80px;font-size:8.6px;color:#444;-webkit-text-stroke-width:0px;">P</span>
<span class="t rn" style="left:0px;top:151.46px;font-size:8.6px;color:#217346;-webkit-text-stroke-width:0.1px;">1</span>
<span class="t rn" style="left:0px;top:164.82px;font-size:8.6px;color:#217346;-webkit-text-stroke-width:0.1px;">2</span>
<span class="t rn" style="left:0px;top:178.18px;font-size:8.6px;color:#217346;-webkit-text-stroke-width:0.1px;">3</span>
<span class="t rn" style="left:0px;top:191.54px;font-size:8.6px;color:#217346;-webkit-text-stroke-width:0.1px;">4</span>
<span class="t rn" style="left:0px;top:204.90px;font-size:8.6px;color:#217346;-webkit-text-stroke-width:0.1px;">5</span>
<span class="t rn" style="left:0px;top:218.26px;font-size:8.6px;color:#217346;-webkit-text-stroke-width:0.1px;">6</span>
<span class="t rn" style="left:0px;top:231.62px;font-size:8.6px;color:#217346;-webkit-text-stroke-width:0.1px;">7</span>
<span class="t rn" style="left:0px;top:244.98px;font-size:8.6px;color:#217346;-webkit-text-stroke-width:0.1px;">8</span>
<span class="t rn" style="left:0px;top:258.34px;font-size:8.6px;color:#217346;-webkit-text-stroke-width:0.1px;">9</span>
<span class="t rn" style="left:0px;top:271.70px;font-size:8.6px;color:#444;-webkit-text-stroke-width:0.1px;">10</span>
<span class="t rn" style="left:0px;top:285.06px;font-size:8.6px;color:#444;-webkit-text-stroke-width:0.1px;">11</span>
<span class="t rn" style="left:0px;top:298.42px;font-size:8.6px;color:#444;-webkit-text-stroke-width:0.1px;">12</span>
<span class="t rn" style="left:0px;top:311.78px;font-size:8.6px;color:#444;-webkit-text-stroke-width:0.1px;">13</span>
<span class="t rn" style="left:0px;top:325.14px;font-size:8.6px;color:#444;-webkit-text-stroke-width:0.1px;">14</span>
<span class="t rn" style="left:0px;top:338.50px;font-size:8.6px;color:#444;-webkit-text-stroke-width:0.1px;">15</span>
<span class="t rn" style="left:0px;top:351.86px;font-size:8.6px;color:#444;-webkit-text-stroke-width:0.1px;">16</span>
<span class="t rn" style="left:0px;top:365.22px;font-size:8.6px;color:#444;-webkit-text-stroke-width:0.1px;">17</span>
<span class="t rn" style="left:0px;top:378.58px;font-size:8.6px;color:#444;-webkit-text-stroke-width:0.1px;">18</span>
<span class="t rn" style="left:0px;top:391.94px;font-size:8.6px;color:#444;-webkit-text-stroke-width:0.1px;">19</span>
<span class="t rn" style="left:0px;top:405.30px;font-size:8.6px;color:#444;-webkit-text-stroke-width:0.1px;">20</span>
<span class="t rn" style="left:0px;top:418.66px;font-size:8.6px;color:#444;-webkit-text-stroke-width:0.1px;">21</span>
<span class="t rn" style="left:0px;top:432.02px;font-size:8.6px;color:#444;-webkit-text-stroke-width:0.1px;">22</span>
<span class="t rn" style="left:0px;top:445.38px;font-size:8.6px;color:#444;-webkit-text-stroke-width:0.1px;">23</span>
<span class="t rn" style="left:0px;top:458.74px;font-size:8.6px;color:#444;-webkit-text-stroke-width:0.1px;">24</span>
<span class="t rn" style="left:0px;top:472.10px;font-size:8.6px;color:#444;-webkit-text-stroke-width:0.1px;">25</span>
<span class="t rn" style="left:0px;top:485.46px;font-size:8.6px;color:#444;-webkit-text-stroke-width:0.1px;">26</span>
<span class="t rn" style="left:0px;top:498.82px;font-size:8.6px;color:#444;-webkit-text-stroke-width:0.1px;">27</span>
<span class="t rn" style="left:0px;top:512.18px;font-size:8.6px;color:#444;-webkit-text-stroke-width:0.1px;">28</span>
<span class="t " style="left:17.1px;top:151.76px;font-size:9.6px;color:#111;-webkit-text-stroke-width:0.5px;transform:scaleX(0.9266);">столбец 1</span>
<span class="t num" style="left:36.8px;top:164.52px;font-size:9.4px;color:#111;-webkit-text-stroke-width:0.45px;transform:scaleX(0.88);">1</span>
<span class="t num" style="left:36.8px;top:177.88px;font-size:9.4px;color:#111;-webkit-text-stroke-width:0.45px;transform:scaleX(0.88);">1</span>
<span class="t num" style="left:36.8px;top:191.24px;font-size:9.4px;color:#111;-webkit-text-stroke-width:0.45px;transform:scaleX(0.88);">1</span>
<span class="t num" style="left:36.8px;top:204.60px;font-size:9.4px;color:#111;-webkit-text-stroke-width:0.45px;transform:scaleX(0.88);">1</span>
<span class="t num" style="left:36.8px;top:217.96px;font-size:9.4px;color:#111;-webkit-text-stroke-width:0.45px;transform:scaleX(0.88);">1</span>
<span class="t num" style="left:36.8px;top:231.32px;font-size:9.4px;color:#111;-webkit-text-stroke-width:0.45px;transform:scaleX(0.88);">1</span>
<span class="t num" style="left:36.8px;top:244.68px;font-size:9.4px;color:#111;-webkit-text-stroke-width:0.45px;transform:scaleX(0.88);">1</span>
<span class="t num" style="left:36.8px;top:258.04px;font-size:9.4px;color:#111;-webkit-text-stroke-width:0.45px;transform:scaleX(0.88);">1</span>
<span class="t " style="left:60.0px;top:151.76px;font-size:9.6px;color:#111;-webkit-text-stroke-width:0.5px;transform:scaleX(0.9266);">столбец 2</span>
<span class="t num" style="left:79.5px;top:164.52px;font-size:9.4px;color:#111;-webkit-text-stroke-width:0.45px;transform:scaleX(0.88);">2</span>
<span class="t num" style="left:79.5px;top:177.88px;font-size:9.4px;color:#111;-webkit-text-stroke-width:0.45px;transform:scaleX(0.88);">2</span>
<span class="t num" style="left:79.5px;top:191.24px;font-size:9.4px;color:#111;-webkit-text-stroke-width:0.45px;transform:scaleX(0.88);">2</span>
<span class="t num" style="left:79.5px;top:204.60px;font-size:9.4px;color:#111;-webkit-text-stroke-width:0.45px;transform:scaleX(0.88);">2</span>
<span class="t num" style="left:79.5px;top:217.96px;font-size:9.4px;color:#111;-webkit-text-stroke-width:0.45px;transform:scaleX(0.88);">2</span>
<span class="t num" style="left:79.5px;top:231.32px;font-size:9.4px;color:#111;-webkit-text-stroke-width:0.45px;transform:scaleX(0.88);">2</span>
<span class="t num" style="left:79.5px;top:244.68px;font-size:9.4px;color:#111;-webkit-text-stroke-width:0.45px;transform:scaleX(0.88);">2</span>
<span class="t num" style="left:79.5px;top:258.04px;font-size:9.4px;color:#111;-webkit-text-stroke-width:0.45px;transform:scaleX(0.88);">2</span>
<span class="t " style="left:102.69999999999999px;top:151.76px;font-size:9.6px;color:#111;-webkit-text-stroke-width:0.5px;transform:scaleX(0.9266);">столбец 3</span>
<span class="t num" style="left:121.80000000000001px;top:164.52px;font-size:9.4px;color:#111;-webkit-text-stroke-width:0.45px;transform:scaleX(0.88);">3</span>
<span class="t num" style="left:121.80000000000001px;top:177.88px;font-size:9.4px;color:#111;-webkit-text-stroke-width:0.45px;transform:scaleX(0.88);">3</span>
<span class="t num" style="left:121.80000000000001px;top:191.24px;font-size:9.4px;color:#111;-webkit-text-stroke-width:0.45px;transform:scaleX(0.88);">3</span>
<span class="t num" style="left:121.80000000000001px;top:204.60px;font-size:9.4px;color:#111;-webkit-text-stroke-width:0.45px;transform:scaleX(0.88);">3</span>
<span class="t num" style="left:121.80000000000001px;top:217.96px;font-size:9.4px;color:#111;-webkit-text-stroke-width:0.45px;transform:scaleX(0.88);">3</span>
<span class="t num" style="left:121.80000000000001px;top:231.32px;font-size:9.4px;color:#111;-webkit-text-stroke-width:0.45px;transform:scaleX(0.88);">3</span>
<span class="t num" style="left:121.80000000000001px;top:244.68px;font-size:9.4px;color:#111;-webkit-text-stroke-width:0.45px;transform:scaleX(0.88);">3</span>
<span class="t num" style="left:121.80000000000001px;top:258.04px;font-size:9.4px;color:#111;-webkit-text-stroke-width:0.45px;transform:scaleX(0.88);">3</span>
<span class="t " style="left:145.0px;top:151.76px;font-size:9.6px;color:#111;-webkit-text-stroke-width:0.5px;transform:scaleX(0.9266);">столбец 4</span>
<span class="t num" style="left:177.6px;top:164.52px;font-size:9.4px;color:#111;-webkit-text-stroke-width:0.45px;transform:scaleX(0.88);">4</span>
<span class="t num" style="left:177.6px;top:177.88px;font-size:9.4px;color:#111;-webkit-text-stroke-width:0.45px;transform:scaleX(0.88);">4</span>
<span class="t num" style="left:177.6px;top:191.24px;font-size:9.4px;color:#111;-webkit-text-stroke-width:0.45px;transform:scaleX(0.88);">4</span>
<span class="t num" style="left:177.6px;top:204.60px;font-size:9.4px;color:#111;-webkit-text-stroke-width:0.45px;transform:scaleX(0.88);">4</span>
<span class="t num" style="left:177.6px;top:217.96px;font-size:9.4px;color:#111;-webkit-text-stroke-width:0.45px;transform:scaleX(0.88);">4</span>
<span class="t num" style="left:177.6px;top:231.32px;font-size:9.4px;color:#111;-webkit-text-stroke-width:0.45px;transform:scaleX(0.88);">4</span>
<span class="t num" style="left:177.6px;top:244.68px;font-size:9.4px;color:#111;-webkit-text-stroke-width:0.45px;transform:scaleX(0.88);">4</span>
<span class="t num" style="left:177.6px;top:258.04px;font-size:9.4px;color:#111;-webkit-text-stroke-width:0.45px;transform:scaleX(0.88);">4</span>
<span class="t " style="left:200.79999999999998px;top:151.76px;font-size:9.6px;color:#111;-webkit-text-stroke-width:0.5px;transform:scaleX(0.9266);">столбец 5</span>
<span class="t num" style="left:232.4px;top:164.52px;font-size:9.4px;color:#111;-webkit-text-stroke-width:0.45px;transform:scaleX(0.88);">5</span>
<span class="t num" style="left:232.4px;top:177.88px;font-size:9.4px;color:#111;-webkit-text-stroke-width:0.45px;transform:scaleX(0.88);">5</span>
<span class="t num" style="left:232.4px;top:191.24px;font-size:9.4px;color:#111;-webkit-text-stroke-width:0.45px;transform:scaleX(0.88);">5</span>
<span class="t num" style="left:232.4px;top:204.60px;font-size:9.4px;color:#111;-webkit-text-stroke-width:0.45px;transform:scaleX(0.88);">5</span>
<span class="t num" style="left:232.4px;top:217.96px;font-size:9.4px;color:#111;-webkit-text-stroke-width:0.45px;transform:scaleX(0.88);">5</span>
<span class="t num" style="left:232.4px;top:231.32px;font-size:9.4px;color:#111;-webkit-text-stroke-width:0.45px;transform:scaleX(0.88);">5</span>
<span class="t num" style="left:232.4px;top:244.68px;font-size:9.4px;color:#111;-webkit-text-stroke-width:0.45px;transform:scaleX(0.88);">5</span>
<span class="t num" style="left:232.4px;top:258.04px;font-size:9.4px;color:#111;-webkit-text-stroke-width:0.45px;transform:scaleX(0.88);">5</span>
<span class="t " style="left:255.6px;top:151.76px;font-size:9.6px;color:#111;-webkit-text-stroke-width:0.5px;transform:scaleX(0.9266);">столбец 6</span>
<span class="t num" style="left:286.9px;top:164.52px;font-size:9.4px;color:#111;-webkit-text-stroke-width:0.45px;transform:scaleX(0.88);">6</span>
<span class="t num" style="left:286.9px;top:177.88px;font-size:9.4px;color:#111;-webkit-text-stroke-width:0.45px;transform:scaleX(0.88);">6</span>
<span class="t num" style="left:286.9px;top:191.24px;font-size:9.4px;color:#111;-webkit-text-stroke-width:0.45px;transform:scaleX(0.88);">6</span>
<span class="t num" style="left:286.9px;top:204.60px;font-size:9.4px;color:#111;-webkit-text-stroke-width:0.45px;transform:scaleX(0.88);">6</span>
<span class="t num" style="left:286.9px;top:217.96px;font-size:9.4px;color:#111;-webkit-text-stroke-width:0.45px;transform:scaleX(0.88);">6</span>
<span class="t num" style="left:286.9px;top:231.32px;font-size:9.4px;color:#111;-webkit-text-stroke-width:0.45px;transform:scaleX(0.88);">6</span>
<span class="t num" style="left:286.9px;top:244.68px;font-size:9.4px;color:#111;-webkit-text-stroke-width:0.45px;transform:scaleX(0.88);">6</span>
<span class="t num" style="left:286.9px;top:258.04px;font-size:9.4px;color:#111;-webkit-text-stroke-width:0.45px;transform:scaleX(0.88);">6</span>
<span class="t " style="left:310.1px;top:151.76px;font-size:9.6px;color:#111;-webkit-text-stroke-width:0.5px;transform:scaleX(0.9266);">столбец 7</span>
<span class="t num" style="left:342.4px;top:164.52px;font-size:9.4px;color:#111;-webkit-text-stroke-width:0.45px;transform:scaleX(0.88);">7</span>
<span class="t num" style="left:342.4px;top:177.88px;font-size:9.4px;color:#111;-webkit-text-stroke-width:0.45px;transform:scaleX(0.88);">7</span>
<span class="t num" style="left:342.4px;top:191.24px;font-size:9.4px;color:#111;-webkit-text-stroke-width:0.45px;transform:scaleX(0.88);">7</span>
<span class="t num" style="left:342.4px;top:204.60px;font-size:9.4px;color:#111;-webkit-text-stroke-width:0.45px;transform:scaleX(0.88);">7</span>
<span class="t num" style="left:342.4px;top:217.96px;font-size:9.4px;color:#111;-webkit-text-stroke-width:0.45px;transform:scaleX(0.88);">7</span>
<span class="t num" style="left:342.4px;top:231.32px;font-size:9.4px;color:#111;-webkit-text-stroke-width:0.45px;transform:scaleX(0.88);">7</span>
<span class="t num" style="left:342.4px;top:244.68px;font-size:9.4px;color:#111;-webkit-text-stroke-width:0.45px;transform:scaleX(0.88);">7</span>
<span class="t num" style="left:342.4px;top:258.04px;font-size:9.4px;color:#111;-webkit-text-stroke-width:0.45px;transform:scaleX(0.88);">7</span>
<span class="t " style="left:214.3px;top:91.60px;font-size:8.2px;color:#111;font-weight:700;z-index:11;-webkit-text-stroke-width:0.4px;transform:scaleX(0.9529);">Границы</span>
<span class="t " style="left:214.3px;top:359.50px;font-size:8.2px;color:#111;font-weight:700;z-index:11;-webkit-text-stroke-width:0.4px;transform:scaleX(0.9437);">Нарисовать границы</span>
<span class="t " style="left:230.2px;top:111.50px;font-size:8.2px;color:#262626;z-index:11;transform:scaleX(0.9824);">Ни<u>ж</u>няя граница</span>
<span class="t " style="left:230.2px;top:130.10px;font-size:8.2px;color:#262626;z-index:11;transform:scaleX(0.9430);"><u>В</u>ерхняя граница</span>
<span class="t " style="left:230.2px;top:148.70px;font-size:8.2px;color:#262626;z-index:11;transform:scaleX(0.9447);"><u>Л</u>евая граница</span>
<span class="t " style="left:230.2px;top:167.30px;font-size:8.2px;color:#262626;z-index:11;transform:scaleX(0.9516);">Прав<u>а</u>я граница</span>
<span class="t " style="left:230.2px;top:187.90px;font-size:8.2px;color:#262626;z-index:11;transform:scaleX(0.9809);">Нет г<u>р</u>аницы</span>
<span class="t " style="left:230.2px;top:206.50px;font-size:8.2px;color:#262626;z-index:11;transform:scaleX(0.9656);">В<u>с</u>е границы</span>
<span class="t " style="left:230.2px;top:225.10px;font-size:8.2px;color:#262626;z-index:11;transform:scaleX(0.9853);">Вне<u>ш</u>ние границы</span>
<span class="t " style="left:230.2px;top:243.70px;font-size:8.2px;color:#262626;z-index:11;transform:scaleX(0.9876);">Толст<u>ы</u>е внешние границы</span>
<span class="t " style="left:230.2px;top:264.30px;font-size:8.2px;color:#262626;z-index:11;transform:scaleX(0.9642);">Сдвоенная ни<u>ж</u>няя граница</span>
<span class="t " style="left:230.2px;top:282.90px;font-size:8.2px;color:#262626;z-index:11;transform:scaleX(0.9741);"><u>Т</u>олстая нижняя граница</span>
<span class="t " style="left:230.2px;top:301.50px;font-size:8.2px;color:#262626;z-index:11;transform:scaleX(0.9679);">Верхняя и <u>н</u>ижняя границы</span>
<span class="t " style="left:230.2px;top:320.10px;font-size:8.2px;color:#262626;z-index:11;transform:scaleX(0.9643);">Вер<u>х</u>няя и толстая нижняя границы</span>
<span class="t " style="left:230.2px;top:338.70px;font-size:8.2px;color:#262626;z-index:11;transform:scaleX(0.9599);">Верхняя и сдвоенная нижняя границ<u>ы</u></span>
<span class="t " style="left:230.2px;top:378.10px;font-size:8.2px;color:#262626;z-index:11;transform:scaleX(0.9748);">Нарисоват<u>ь</u> границу</span>
<span class="t " style="left:230.2px;top:396.70px;font-size:8.2px;color:#262626;z-index:11;transform:scaleX(0.9572);">Нарис<u>о</u>вать сетку</span>
<span class="t " style="left:230.2px;top:415.30px;font-size:8.2px;color:#262626;z-index:11;transform:scaleX(0.9520);">Стереть границ<u>у</u></span>
<span class="t " style="left:230.2px;top:433.90px;font-size:8.2px;color:#262626;z-index:11;transform:scaleX(0.9712);"><u>Ц</u>вет линии</span>
<span class="t " style="left:230.2px;top:452.50px;font-size:8.2px;color:#262626;z-index:11;transform:scaleX(0.9961);">Ти<u>п</u> линии</span>
<span class="t " style="left:230.2px;top:473.90px;font-size:8.2px;color:#262626;z-index:11;transform:scaleX(0.9805);">Дру<u>г</u>ие границы...</span>
</div></body></html>
